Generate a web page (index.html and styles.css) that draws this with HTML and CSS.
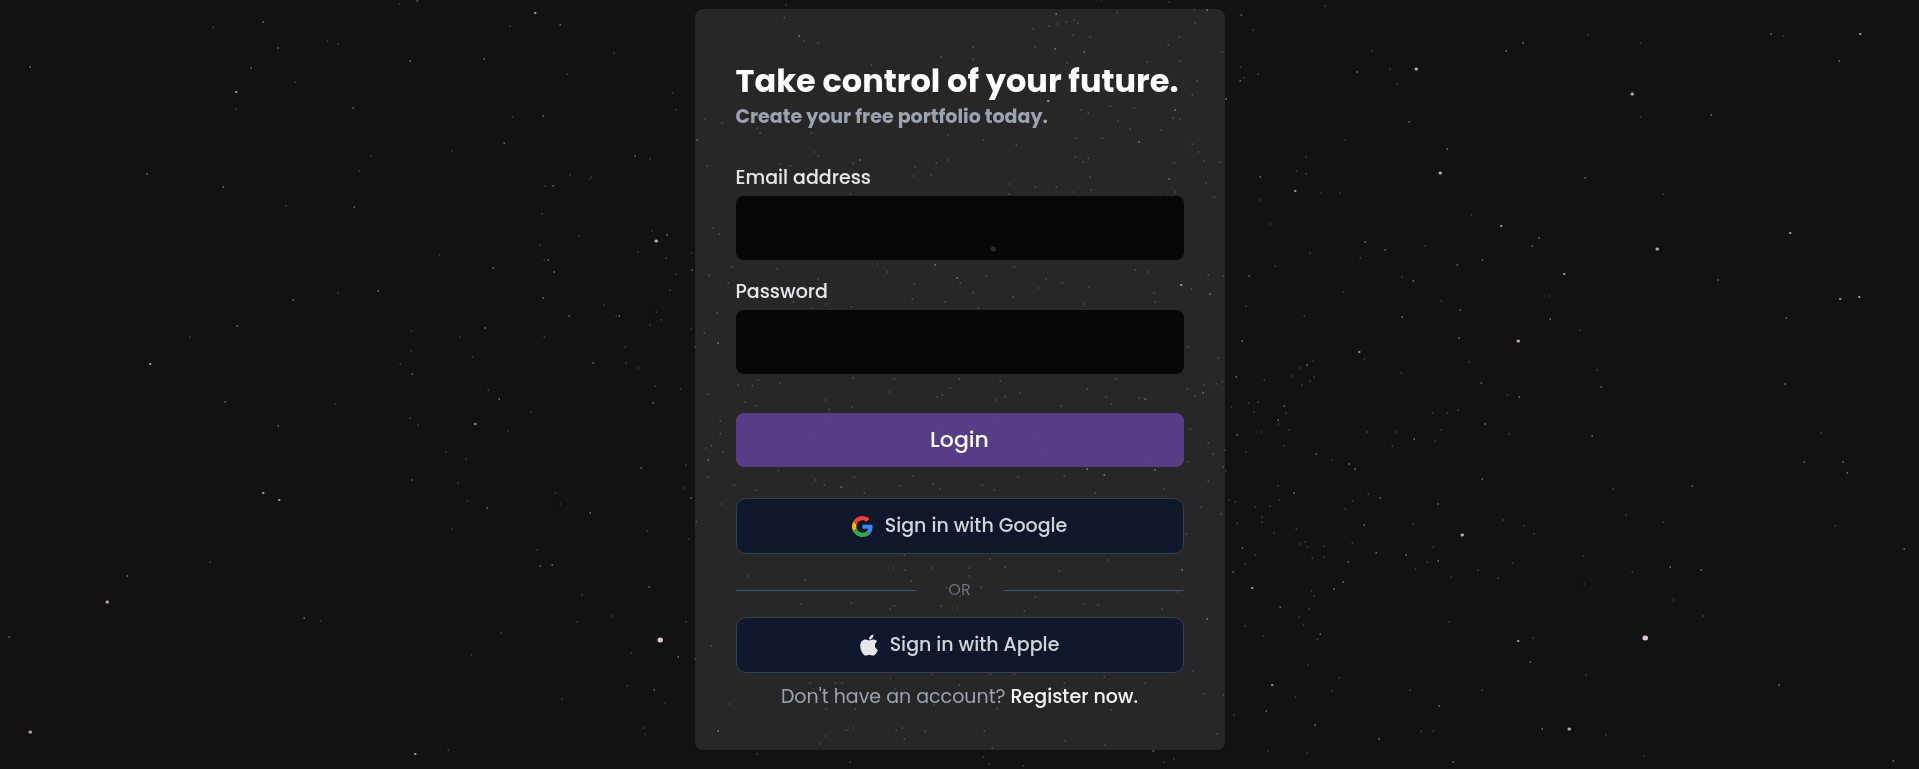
FILE: index.html
```html
<!DOCTYPE html>
<html lang="en">
<head>
<meta charset="utf-8">
<meta name="viewport" content="width=device-width, initial-scale=1">
<title>Login</title>
<link rel="stylesheet" href="styles.css">
</head>
<body>
<svg class="sky" viewBox="0 0 1919 769" preserveAspectRatio="xMidYMin slice" aria-hidden="true"><g class="stars"></g></svg>
<main class="page">
  <section class="card">
    <h1 class="title">Take control of your future.</h1>
    <p class="subtitle">Create your free portfolio today.</p>
    <form class="form">
      <div class="field">
        <label class="label" for="email">Email address</label>
        <input class="input" id="email" name="email" type="email" autocomplete="email">
      </div>
      <div class="field">
        <label class="label" for="password">Password</label>
        <input class="input" id="password" name="password" type="password" autocomplete="current-password">
      </div>
      <button class="login" type="submit">Login</button>
    </form>
    <button class="provider" type="button">
      <svg class="google" viewBox="3 3 42 42" aria-hidden="true">
        <path fill="#ea4335" d="M24 9.500c3.540 0 6.710 1.220 9.210 3.600l6.850-6.850C35.900 2.380 30.470 0 24 0 14.620 0 6.510 5.380 2.560 13.220l7.980 6.190C12.430 13.720 17.740 9.500 24 9.500z" transform="translate(3 3) scale(.875)"/>
        <path fill="#4285f4" d="M46.980 24.550c0-1.570-.15-3.090-.38-4.550H24v9.020h12.940c-.58 2.960-2.260 5.480-4.780 7.180l7.730 6c4.510-4.180 7.090-10.360 7.090-17.650z" transform="translate(3 3) scale(.875)"/>
        <path fill="#fbbc05" d="M10.530 28.590c-.48-1.450-.76-2.990-.76-4.590s.27-3.140.76-4.590l-7.980-6.190C.92 16.460 0 20.120 0 24c0 3.880.92 7.540 2.560 10.780l7.970-6.190z" transform="translate(3 3) scale(.875)"/>
        <path fill="#34a853" d="M24 48c6.480 0 11.930-2.130 15.890-5.810l-7.730-6c-2.150 1.450-4.920 2.300-8.160 2.300-6.260 0-11.570-4.220-13.470-9.910l-7.980 6.190C6.510 42.620 14.620 48 24 48z" transform="translate(3 3) scale(.875)"/>
      </svg>
      Sign in with Google
    </button>
    <div class="divider"><span>OR</span></div>
    <button class="provider" type="button">
      <svg class="apple" viewBox="0 32 384 448" aria-hidden="true">
        <path d="M318.700 268.700c-.2-36.700 16.400-64.400 50-84.800-18.800-26.900-47.200-41.700-84.700-44.600-35.500-2.800-74.300 20.700-88.500 20.700-15 0-49.400-19.700-76.400-19.700C63.300 141.200 4 184.800 4 273.500q0 39.300 14.400 81.200c12.800 36.700 59 126.700 107.200 125.200 25.200-.6 43-17.900 75.800-17.900 31.800 0 48.300 17.900 76.400 17.900 48.600-.7 90.400-82.500 102.600-119.300-65.200-30.700-61.700-90-61.700-91.900zm-56.600-164.200c27.300-32.400 24.800-61.900 24-72.500-24.100 1.400-52 16.400-67.900 34.900-17.500 19.800-27.800 44.300-25.600 71.900 26.100 2 49.900-11.400 69.500-34.300z"/>
      </svg>
      Sign in with Apple
    </button>
    <p class="register">Don't have an account? <a class="register-link" href="#">Register now.</a></p>
  </section>
</main>
<script src="stars.js"></script>
</body>
</html>
```

FILE: styles.css
```css
* {
  box-sizing: border-box;
}

body {
  margin: 0;
  min-height: 100vh;
  background: #121212;
  color: #e5e7eb;
  font-family: Poppins, Inter, "Open Sans", sans-serif;
  font-size: 19px;
  line-height: 28px;
}

.sky {
  position: fixed;
  inset: 0;
  width: 100%;
  height: 100%;
  z-index: -1;
}

.stars {
  fill: none;
  stroke: #f0dcea;
  stroke-linecap: round;
}

.star-faint { stroke-width: 1; opacity: 0.38; }
.star-soft { stroke-width: 1; opacity: 0.85; }
.star-bright { stroke-width: 2; opacity: 0.65; }
.star-large { stroke-width: 3; opacity: 0.75; }
.star-huge { stroke-width: 5; opacity: 0.9; }

.page {
  display: flex;
  justify-content: center;
  align-items: flex-start;
  padding: 9px 16px;
}

.card {
  width: 100%;
  max-width: 530px;
  padding: 50px 40px 38px;
  border: 1px solid transparent;
  border-radius: 8px;
  background: rgba(255, 255, 255, 0.09);
}

.title {
  margin: 0;
  color: #fff;
  font-size: 32px;
  font-weight: 700;
  line-height: 42px;
  text-align: left;
}

.subtitle {
  margin: 1px 0 33px;
  color: #9ca3af;
  font-weight: 700;
}

.form {
  display: flex;
  flex-direction: column;
}

.field {
  display: flex;
  flex-direction: column;
  gap: 4px;
  margin-bottom: 18px;
}

.label {
  font-weight: 500;
}

.input {
  width: 100%;
  height: 64px;
  padding: 0 16px;
  border: 0;
  border-radius: 8px;
  background: rgba(0, 0, 0, 0.8);
  color: #fff;
  font: inherit;
}

.login {
  margin: 21px 0 31px;
  padding: 13px 16px;
  border: 0;
  border-radius: 8px;
  background: rgba(99, 68, 158, 0.8);
  color: #fff;
  font-family: inherit;
  font-size: 22px;
  font-weight: 500;
  line-height: 28px;
}

.provider {
  display: flex;
  align-items: center;
  justify-content: center;
  gap: 12px;
  width: 100%;
  padding: 13px 16px;
  border: 1px solid #334155;
  border-radius: 10px;
  background: #0f172a;
  color: #d1d5db;
  font-family: inherit;
  font-size: 19px;
  font-weight: 500;
  line-height: 28px;
}

.google {
  width: 21px;
  height: 21px;
}

.apple {
  width: 18px;
  height: 22px;
  fill: #e5e7eb;
}

.divider {
  display: grid;
  grid-template-columns: 1fr 88px 1fr;
  align-items: center;
  margin: 24px 0 15px;
  color: #6b7280;
  font-size: 16px;
  line-height: 24px;
  text-align: center;
}

.divider::before,
.divider::after {
  content: "";
  height: 1px;
  background: #475569;
}

.register {
  margin: 10px 0 0;
  color: #9ca3af;
  text-align: center;
}

.register-link {
  color: #f3f4f6;
  font-weight: 500;
  text-decoration: none;
}
```

FILE: stars.js
```js
// Star positions on a 1919 x 769 sky, grouped by brightness.
const sky = {
  faint: `213 27,327 41,338 44,295 82,236 109,286 206,338 293,190 337,399 4,510 26,614 53,567 74,672 93,676 110,512 117,452 151,371 156,359 171,650 159,570 175,591 177,590 179,545 186,542 214,579 236,652 231,540 245,638 252,666 258,691 253,439 255,544 260,676 274,670 290,604 305,656 312,616 316,661 320,650 325,691 329,411 331,544 337,460 337,625 347,411 351,472 357,400 364,626 363,638 368,
335 404,210 562,320 621,488 390,531 412,655 386,680 389,410 418,418 425,508 431,446 452,466 459,458 483,467 501,555 493,560 504,686 465,684 488,452 529,647 531,688 539,537 550,582 595,577 622,612 616,686 622,501 633,471 655,631 653,627 686,562 699,665 703,643 728,645 734,448 750,
1325 6,1253 30,1372 51,1240 67,1244 78,1258 74,1390 69,1397 84,1345 140,1306 157,1296 171,1306 174,1321 193,1340 193,1259 200,1270 224,1471 215,1425 246,1310 253,1360 258,1275 266,1402 277,1343 292,1549 296,1441 301,1246 306,1304 316,1364 359,1313 361,1299 368,1469 362,1401 373,1292 376,1314 377,1264 380,1310 381,
1302 385,1507 395,1248 403,1258 402,1231 407,1254 412,1286 413,1432 413,1447 413,1458 410,1278 424,1289 430,1261 432,1441 430,1367 432,1395 432,1509 434,1284 446,1392 446,1435 441,1225 450,1246 452,1332 460,1226 471,1278 486,1229 500,1235 502,1279 500,1368 494,1352 501,1345 509,1255 507,1270 506,1262 517,1237 523,1262 522,1413 524,1503 520,1524 526,1534 534,1274 533,1296 529,1305 542,1300 544,1307 547,1324 546,1352 543,1433 547,1255 555,1312 558,1324 557,1427 562,1512 563,1245 564,1415 569,1478 570,1451 577,1498 578,1311 591,1314 596,1309 609,1299 617,1303 625,1245 626,1263 636,1317 639,1449 622,1533 638,1308 665,1339 678,1332 691,1295 697,1410 690,1482 690,1234 715,1421 731,1433 731,1268 751,1307 753,
1588 35,1640 43,1640 117,1783 36,1663 194,1580 330,1597 370,1821 433,1613 489,1626 515,1663 522,1835 526,1583 556,1632 572,1584 584,1673 600,1703 616,1586 675,1606 735,1644 756,
786 5,1101 0,1169 2,784 18,804 41,818 43,1117 13,1049 26,1033 29,1057 24,1066 22,1074 20,1078 23,1073 35,1090 37,1179 37,1168 45,1195 23,1194 10,1035 47,1222 52,1180 61,1147 62,1067 63,973 47,973 59,941 57,871 65,1197 81,1192 95,1110 106,1134 108,1173 118,1180 119,1081 110,1088 113,1118 121,1130 129,1161 130,1076 138,1102 138,1192 144,1198 152,1204 161,1174 163,1220 162,1075 157,1083 162,1088 158,983 140,1016 145,948 135,811 133,705 119,722 123,757 128,760 133,707 166,814 152,818 156,853 163,780 164,790 166,948 160,936 163,915 167,931 175,914 176,1206 183,1175 192,1214 197,1072 192,1090 177,1091 190,1056 187,1035 187,1010 184,1009 194,850 194,713 228,719 234,732 267,777 269,
796 210,838 220,877 231,939 217,1008 203,1074 214,1097 213,1161 218,955 230,1053 232,1118 238,
877 264,887 272,1014 267,1135 270,1148 272,709 275,728 283,818 279,823 284,960 283,986 276,914 284,1046 279,1062 283,1038 288,1089 287,1191 289,1208 275,1223 276,973 293,912 299,945 302,1013 297,1154 293,1155 302,1084 304,793 302,812 308,826 304,851 307,978 308,717 313,704 333,1188 347,1218 358,695 347,750 326,774 335,838 329,870 320,989 330,1034 353,1060 322,1129 328,1147 335,
758 380,780 383,738 385,752 386,708 394,853 378,894 379,959 379,1000 381,950 388,889 392,937 397,942 395,1005 397,1020 393,1087 389,1106 397,1116 379,1139 398,1111 404,1204 385,1195 396,1187 389,1216 384,1222 382,745 402,756 406,825 400,829 410,852 407,1061 406,995 400,
811 419,826 420,859 424,827 430,809 437,917 424,937 427,907 445,993 421,1033 436,1052 425,1102 432,1133 425,1123 438,1100 447,1045 453,1148 458,720 421,720 434,711 446,706 448,723 452,1190 429,1208 443,1213 454,1188 462,1223 467,778 470,913 476,854 477,708 477,1018 477,
734 485,756 490,815 480,824 485,900 486,933 484,940 489,982 485,994 490,864 493,1064 476,1095 493,1164 489,1208 481,722 504,696 522,1201 507,1221 514,1186 534,904 555,990 559,1108 560,893 568,931 568,905 570,1005 567,1059 571,748 576,805 580,911 581,946 588,981 587,969 568,969 576,960 596,801 604,851 603,894 606,890 609,941 606,957 608,1035 597,1084 604,1098 605,1024 611,1162 609,1178 592,
711 646,695 659,1193 671,890 678,932 674,990 674,1014 674,1104 677,810 683,835 683,842 683,1064 683,1145 683,895 689,959 685,730 704,826 709,855 709,997 709,934 705,1111 710,1204 694,1223 695,846 730,853 728,896 730,902 728,925 731,984 731,826 736,904 739,820 744,1065 741,1105 745,1217 734,992 748,757 754,850 762,983 757,989 764,1023 766,1164 762,1174 759`,
  soft: `263 22,278 48,30 67,251 68,147 174,223 187,293 300,237 326,417 1,560 25,484 59,410 61,353 108,543 116,504 143,635 156,553 186,354 207,667 235,548 260,493 268,554 272,692 270,378 291,543 298,569 316,619 316,485 328,593 363,412 374,225 402,278 426,127 576,304 618,9 637,499 399,653 403,412 480,487 508,590 513,641 468,691 498,540 566,552 565,649 587,678 657,654 690,
1241 15,1506 51,1523 43,1240 81,1357 72,1226 99,1409 122,1447 149,1260 177,1539 238,1532 246,1365 242,1385 250,1482 260,1457 265,1249 276,1413 281,1460 310,1402 317,1550 319,1242 341,1459 338,1307 365,1236 377,1481 383,
1519 397,1284 406,1278 420,1485 424,1237 435,1414 439,1316 454,1349 464,1355 469,1482 479,1294 493,1380 498,1438 504,1364 525,1242 548,1376 553,1406 555,1348 562,1438 561,1233 572,1343 582,1334 589,1280 607,1320 634,1530 662,1266 711,1439 706,1315 725,1379 739,1542 729,1453 762,
1711 115,1771 34,1839 61,1585 178,1718 280,1786 318,1601 387,1785 384,1592 436,1804 462,1843 462,1847 473,1692 486,1904 549,1670 567,1701 570,1779 685,1893 761,
1207 10,799 36,1056 14,1055 49,1084 52,1175 110,1139 142,697 140,860 160,1169 179,1160 197,935 265,957 278,1210 294,718 343,1145 399,1203 393,708 460,1087 469,1155 470,1104 475,841 487,1182 570,1207 619,718 731,1153 751`,
  bright: `236 92,150 364,535 13,263 493,279 500,475 424,415 754,1564 274,1359 352,1252 588,1272 685,1860 34,1790 233,1840 299,1859 297,1048 101,1181 285,1518 641,1295 191,1501 226`,
  large: `656 241,107 602,30 732,1416 69,1440 173,1518 341,1462 535,1569 729,1632 94,1657 249`,
  huge: `660 640,1645 638,993 249`
};

const group = document.querySelector(".stars");
for (const [name, list] of Object.entries(sky)) {
  const path = document.createElementNS("http://www.w3.org/2000/svg", "path");
  path.setAttribute("class", "star-" + name);
  path.setAttribute("d", list.split(",").map(p => "M" + p.trim() + "h.5").join(""));
  group.append(path);
}
```
